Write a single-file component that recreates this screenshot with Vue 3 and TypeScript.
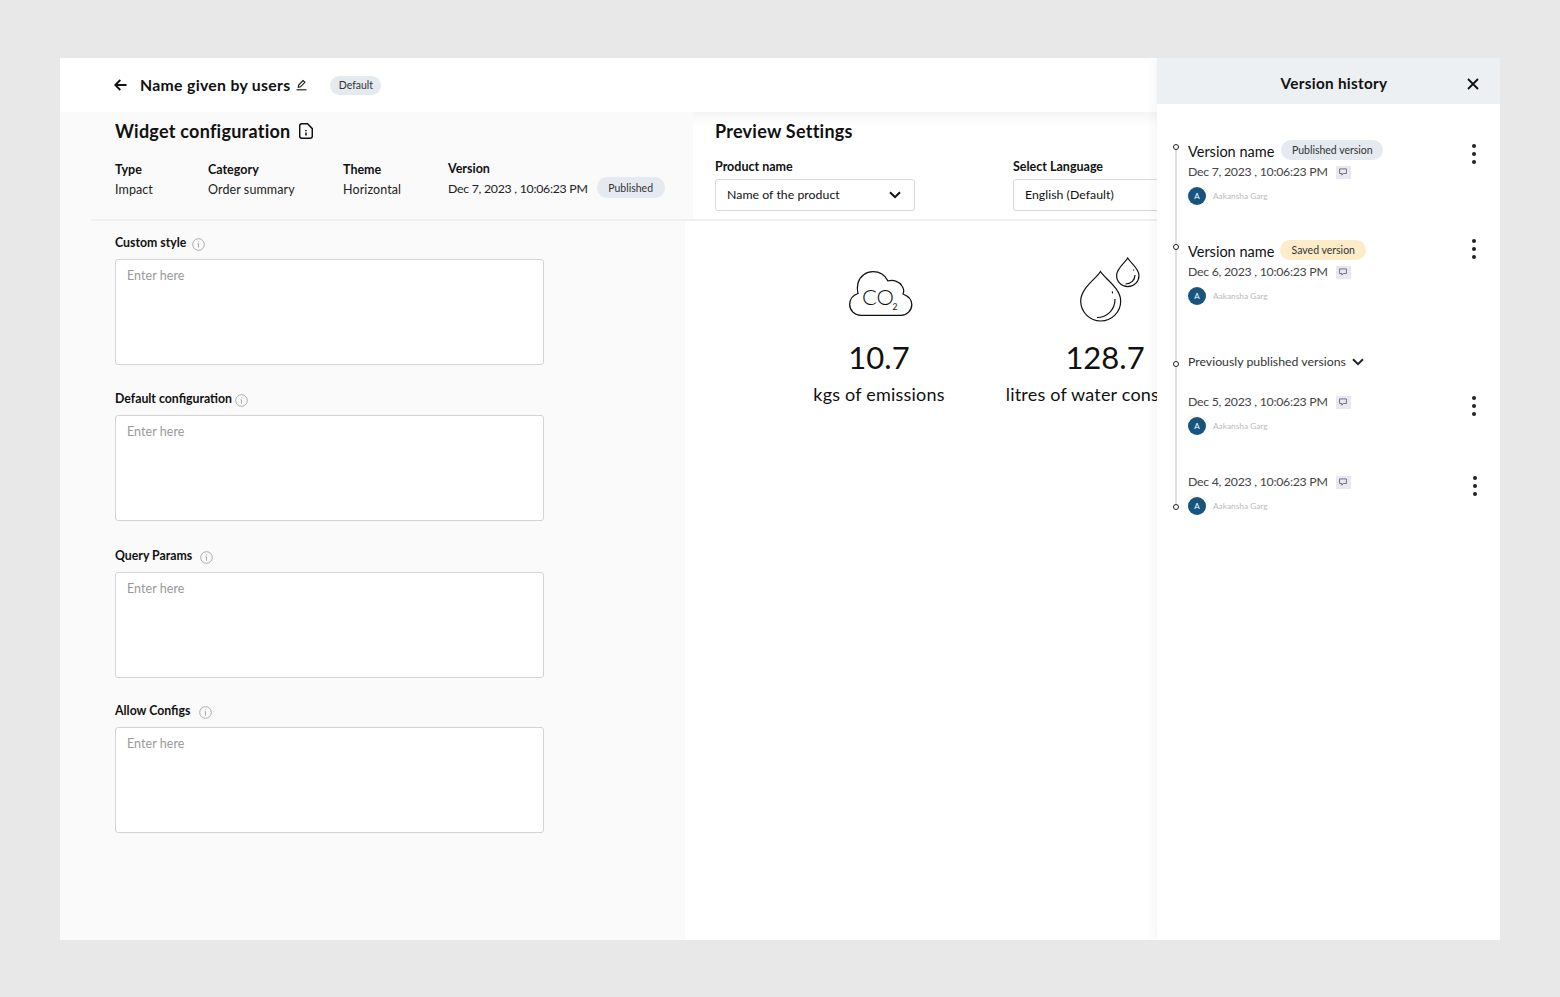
<script setup lang="ts">
interface Meta { label: string; value: string; cls: string }
interface Field { label: string; cls: string }
interface Version { name?: string; tag?: string; tagCls?: string; date: string; cls: string }

const metas: Meta[] = [
  { label: 'Type', value: 'Impact', cls: 'm-type' },
  { label: 'Category', value: 'Order summary', cls: 'm-cat' },
  { label: 'Theme', value: 'Horizontal', cls: 'm-theme' },
]
const fields: Field[] = [
  { label: 'Custom style', cls: 'f1' },
  { label: 'Default configuration', cls: 'f2' },
  { label: 'Query Params', cls: 'f3' },
  { label: 'Allow Configs', cls: 'f4' },
]
const published: Version[] = [
  { name: 'Version name', tag: 'Published version', tagCls: 'tag-blue', date: 'Dec 7, 2023 , 10:06:23 PM', cls: 'v1' },
  { name: 'Version name', tag: 'Saved version', tagCls: 'tag-yellow', date: 'Dec 6, 2023 , 10:06:23 PM', cls: 'v2' },
]
const previous: Version[] = [
  { date: 'Dec 5, 2023 , 10:06:23 PM', cls: 'v3' },
  { date: 'Dec 4, 2023 , 10:06:23 PM', cls: 'v4' },
]
</script>

<template>
  <div class="page">
    <div class="card">
      <main class="main">
        <header class="topbar">
          <svg class="ic-back" width="13" height="12" viewBox="0 0 13 12" fill="none" stroke="#111" stroke-width="1.9">
            <path d="M12.500 6H1.500M6.300 1 1.300 6l5 5" />
          </svg>
          <span class="page-title">Name given by users</span>
          <svg class="ic-edit" width="11" height="12" viewBox="0 0 11 12" fill="none" stroke="#111" stroke-width="1.1">
            <path d="M2.300 8.300 2.700 6 7 1.500l1.900 1.800L4.500 7.800z" />
            <path d="M.5 10.800h10" />
          </svg>
          <span class="pill pill-default">Default</span>
        </header>

        <section class="heads">
          <div class="head-left">
            <h2 class="h2">
              Widget configuration
              <svg class="ic-file" width="14" height="16" viewBox="0 0 14 16" fill="none" stroke="#111" stroke-width="1.5">
                <path d="M2.600.8h5.900l4.800 4.800v7.700a1.900 1.900 0 0 1-1.900 1.900H2.600a1.900 1.900 0 0 1-1.900-1.900V2.700A1.900 1.900 0 0 1 2.600.8z" />
                <path d="M7 7v1.200M7 9.600v2.800" />
              </svg>
            </h2>
            <div class="meta-row">
              <div v-for="m in metas" :key="m.label" class="meta" :class="m.cls">
                <div class="meta-label">{{ m.label }}</div>
                <div class="meta-value">{{ m.value }}</div>
              </div>
              <div class="meta m-ver">
                <div class="meta-label">Version</div>
                <div class="meta-value ver-line">
                  <span class="date-txt">Dec 7, 2023 , 10:06:23 PM</span>
                  <span class="pill pill-pub">Published</span>
                </div>
              </div>
            </div>
          </div>
          <div class="head-right">
            <h2 class="h2">Preview Settings</h2>
            <div class="selects">
              <div class="sel-group sel-product">
                <div class="sel-label">Product name</div>
                <div class="select">
                  <span>Name of the product</span>
                  <svg width="12" height="8" viewBox="0 0 12 8" fill="none" stroke="#111" stroke-width="2">
                    <path d="M1 1.200 6 6.200l5-5" />
                  </svg>
                </div>
              </div>
              <div class="sel-group sel-lang">
                <div class="sel-label">Select Language</div>
                <div class="select"><span>English (Default)</span></div>
              </div>
            </div>
          </div>
        </section>

        <div class="divider"></div>

        <section class="bodies">
          <div class="form">
            <div v-for="f in fields" :key="f.label" class="field" :class="f.cls">
              <div class="field-label">
                <span>{{ f.label }}</span>
                <svg class="ic-info" width="13" height="13" viewBox="0 0 13 13" fill="none" stroke="#999" stroke-width="0.8">
                  <circle cx="6.500" cy="6.500" r="5.800" />
                  <path d="M6.500 5.600v4M5.600 5.800h1M6.500 3.400v.9" />
                </svg>
              </div>
              <div class="textarea">Enter here</div>
            </div>
          </div>

          <div class="preview">
            <div class="stat stat-a">
              <svg class="stat-ic" width="64" height="45" viewBox="0 0 64 45" fill="none" stroke="#111" stroke-width="1.3">
                <path d="M12 44.300C5.500 44.300.7 39.500.7 33.500.7 28 4.500 24 9 22.500 8 19 8 16 9 12 11 5 17 .7 24 .7 31 .7 36 4 39 10 44 8.500 50 10 53 15 55 18 55 21 54 23 59 25 62.800 29 62.800 33.500 62.800 39.500 58 44.300 52 44.300Z" />
                <text class="co" x="13" y="34" stroke="none" fill="#111">CO</text>
                <text class="co2" x="43.500" y="39" stroke="none" fill="#111">2</text>
              </svg>
              <div class="stat-num">10.7</div>
              <div class="stat-txt">kgs of emissions</div>
            </div>
            <div class="stat stat-b">
              <svg class="stat-ic" width="61" height="65" viewBox="0 0 61 65" fill="none" stroke="#111" stroke-width="1.2">
                <path d="M20.500 14.500C17 21 .7 31 .7 44a20 20 0 0 0 40 0C40.700 31 24 21 20.500 14.500Z" />
                <path d="M17 60.500C27 60.500 35 53 35 42M32.200 34.500l.5 1.800" />
                <path d="M47.700 1C45.500 5.500 36.600 11 36.600 18.500a11.200 11.200 0 0 0 22.400 0C59 11 50 5.500 47.700 1Z" />
                <path d="M45.500 27C51 27 55 23 55 18M53.500 12.500l.3 1" />
              </svg>
              <div class="stat-num">128.7</div>
              <div class="stat-txt">litres of water consumed</div>
            </div>
          </div>
        </section>
      </main>

      <aside class="aside">
        <div class="aside-head">
          <span class="aside-title">Version history</span>
          <svg class="ic-close" width="12" height="12" viewBox="0 0 12 12" fill="none" stroke="#111" stroke-width="1.8">
            <path d="M1 1l10 10M11 1 1 11" />
          </svg>
        </div>

        <div class="timeline">
          <span class="line"></span>
          <span class="dot d1"></span>
          <span class="dot d2"></span>
          <span class="dot d3"></span>
          <span class="dot d4"></span>

          <article v-for="v in published" :key="v.cls" class="ver" :class="v.cls">
            <div class="ver-main">
              <div class="ver-title">
                <span class="ver-name">{{ v.name }}</span>
                <span class="tag" :class="v.tagCls">{{ v.tag }}</span>
              </div>
              <div class="ver-date">
                <span class="vd">{{ v.date }}</span>
                <span class="note">
                  <svg width="8" height="8" viewBox="0 0 7 7" fill="none" stroke="#556" stroke-width="0.7">
                    <path d="M.5.8h6v4H3.800L2.500 6.300V4.800h-2z" />
                  </svg>
                </span>
              </div>
              <div class="ver-user"><span class="avatar">A</span><span class="uname">Aakansha Garg</span></div>
            </div>
            <div class="kebab"><i></i><i></i><i></i></div>
          </article>

          <div class="prev-toggle">
            <span class="vd">Previously published versions</span>
            <svg width="12" height="8" viewBox="0 0 12 8" fill="none" stroke="#222" stroke-width="2">
              <path d="M1 1.200l5 5 5-5" />
            </svg>
          </div>

          <article v-for="v in previous" :key="v.cls" class="ver" :class="v.cls">
            <div class="ver-main">
              <div class="ver-date">
                <span class="vd">{{ v.date }}</span>
                <span class="note">
                  <svg width="8" height="8" viewBox="0 0 7 7" fill="none" stroke="#556" stroke-width="0.7">
                    <path d="M.5.8h6v4H3.800L2.500 6.300V4.800h-2z" />
                  </svg>
                </span>
              </div>
              <div class="ver-user"><span class="avatar">A</span><span class="uname">Aakansha Garg</span></div>
            </div>
            <div class="kebab"><i></i><i></i><i></i></div>
          </article>
        </div>
      </aside>
    </div>
  </div>
</template>

<style>
html, body { margin: 0; background: #e8e8e8; }
</style>

<style scoped>
.page {
  box-sizing: border-box;
  height: 997px;
  padding: 58px 60px 57px;
  background: #e8e8e8;
  font-family: "Lato", "Noto Sans", sans-serif;
  color: #111;
}
.card { display: flex; height: 882px; background: #fff; overflow: hidden; }
.main { flex: 1; min-width: 0; display: flex; flex-direction: column; overflow: hidden; }
.aside {
  width: 343px; flex: none; background: #fff;
  box-shadow: -4px 0 8px rgba(0, 0, 0, .035);
  position: relative;
}

.topbar { height: 54px; flex: none; display: flex; align-items: center; padding-left: 54px; background: #fff; }
.ic-back { margin-right: 13px; }
.page-title { font-size: 15.800px; font-weight: 700; letter-spacing: .3px; margin-bottom: 2px; }
.ic-edit { margin: 0 23px 0 6px; }
.pill { display: inline-flex; align-items: center; justify-content: center; border-radius: 10px; background: #e4eaf0; color: #333; font-size: 10.500px; letter-spacing: 0; }
.pill-default { width: 51px; height: 19px; }
.pill-pub { width: 68px; height: 21px; margin: 0 0 3px 9px; }

.heads { height: 107px; flex: none; display: flex; }
.head-left { width: 633px; flex: none; box-sizing: border-box; padding: 8px 0 0 55px; background: #fafafa; }
.head-right { flex: 1; min-width: 0; padding: 8px 0 0 22px; background: linear-gradient(180deg, #f5f5f5 0, #fff 14px); }
.h2 { margin: 0; height: 22px; line-height: 22px; font-size: 18px; font-weight: 700; letter-spacing: .25px; display: flex; align-items: center; }
.ic-file { margin-left: 9px; }

.meta-row { display: flex; margin-top: 18px; }
.meta { font-size: 12.500px; }
.m-type { width: 93px; }
.m-cat { width: 135px; }
.m-theme { width: 105px; }
.m-ver { margin-top: -1px; }
.meta-label { height: 20px; line-height: 20px; font-weight: 700; }
.meta-value { height: 20px; line-height: 20px; letter-spacing: .1px; color: #222; }
.ver-line { display: flex; align-items: center; white-space: nowrap; }
.date-txt { font-size: 12.300px; letter-spacing: -.27px; }

.selects { display: flex; margin-top: 15px; }
.sel-group { flex: none; width: 200px; }
.sel-lang { margin-left: 98px; }
.sel-label { height: 20px; line-height: 20px; font-size: 12.500px; font-weight: 700; margin-bottom: 2px; }
.select {
  box-sizing: border-box; height: 32px; display: flex; align-items: center; justify-content: space-between;
  padding: 0 13px 2px 11px; background: #fff; border: 1px solid #d8d8d8; border-radius: 3px;
  font-size: 12.300px; letter-spacing: .03px;
}
.select svg { margin-top: 2px; }

.divider { height: 2px; flex: none; box-sizing: border-box; border-left: 31px solid #fafafa; background: #f0f0f0; }

.bodies { flex: 1; min-height: 0; display: flex; }
.form { width: 625px; flex: none; box-sizing: border-box; padding-left: 55px; background: #fafafa; }
.field-label { display: flex; align-items: center; height: 18px; margin-bottom: 8px; font-size: 12.300px; font-weight: 700; }
.ic-info { margin-top: 4px; }
.f1 { padding-top: 12px; }
.f1 .ic-info { margin-left: 6px; }
.f2 { padding-top: 24px; }
.f2 .ic-info { margin-left: 3px; }
.f3 { padding-top: 25px; }
.f3 .ic-info { margin-left: 8px; }
.f4 { padding-top: 23px; }
.f4 .ic-info { margin-left: 9px; }
.textarea {
  box-sizing: border-box; width: 429px; height: 106px; padding: 8px 11px;
  background: #fff; border: 1px solid #d4d4d4; border-radius: 3px;
  font-size: 12.500px; line-height: 15px; letter-spacing: .05px; color: #999;
}

.preview { flex: 1; min-width: 0; display: flex; overflow: hidden; padding: 36px 0 0 128px; gap: 61px; background: #fff; }
.stat { flex: none; display: flex; flex-direction: column; align-items: center; }
.stat-a { width: 132px; }
.stat-b { width: 198px; }
.stat-a .stat-ic { margin: 14px 0 1px 4px; }
.stat-b .stat-ic { margin: 0 0 -5px 11px; }
.stat-num { margin-top: 18px; height: 44px; line-height: 44px; font-size: 31px; font-weight: 400; }
.stat-txt { margin-top: 3px; height: 24px; line-height: 24px; font-size: 18px; letter-spacing: .2px; white-space: nowrap; }
.co { font: 300 22px "Lato", sans-serif; }
.co2 { font: 400 8.500px "Lato", sans-serif; }

.aside-head { position: relative; box-sizing: border-box; height: 46px; padding: 4px 0 0 11px; display: flex; align-items: center; justify-content: center; background: #ecf0f3; }
.aside-title { font-size: 15.300px; font-weight: 700; letter-spacing: .3px; }
.ic-close { position: absolute; right: 21px; top: 20px; }

.timeline { position: relative; padding: 36px 0 0 31px; }
.line { position: absolute; left: 18px; top: 43px; width: 2px; height: 360px; background: #dedede; }
.dot { position: absolute; left: 16px; width: 6px; height: 6px; box-sizing: border-box; border: 1.300px solid #222; border-radius: 50%; background: #fff; }
.d1 { top: 40px; }
.d2 { top: 140px; }
.d3 { top: 257px; }
.d4 { top: 400px; }

.ver { display: flex; justify-content: space-between; width: 288px; }
.v2 { margin-top: 35px; }
.v3 { margin-top: 24px; }
.v4 { margin-top: 39px; }
.ver-title { display: flex; align-items: center; height: 20px; }
.ver-name { font-size: 14.500px; margin-top: 2px; }
.tag { display: inline-flex; align-items: center; justify-content: center; height: 20px; border-radius: 10px; font-size: 10.500px; color: #333; }
.tag-blue { width: 102px; margin-left: 7px; background: #e4eaf0; }
.tag-yellow { width: 86px; margin-left: 6px; background: #fdecc8; }
.ver-date { display: flex; align-items: center; height: 16px; margin-top: 4px; font-size: 12.300px; letter-spacing: -.27px; color: #444; }
.vd { margin-top: -2px; }
.v3 .ver-date, .v4 .ver-date { margin-top: 0; }
.note { display: inline-flex; align-items: center; justify-content: center; width: 15px; height: 13px; margin-left: 8px; background: #e8e8f2; }
.ver-user { display: flex; align-items: center; height: 18px; margin-top: 7px; }
.avatar { width: 18px; height: 18px; border-radius: 50%; background: #17557f; color: #fff; font-size: 8px; display: flex; align-items: center; justify-content: center; }
.uname { margin-left: 7px; font-size: 8.300px; color: #bbb; }
.kebab { display: flex; flex-direction: column; gap: 4px; width: 4px; }
.kebab i { width: 4px; height: 4px; border-radius: 50%; background: #222; }
.v1 .kebab { margin-top: 4px; }
.v2 .kebab { margin-top: -1px; }
.v3 .kebab, .v4 .kebab { margin-top: 2px; }
.v4 .kebab { margin-right: -1px; }
.prev-toggle { display: flex; align-items: center; gap: 6px; height: 16px; margin-top: 49px; font-size: 12.300px; color: #333; }
</style>
